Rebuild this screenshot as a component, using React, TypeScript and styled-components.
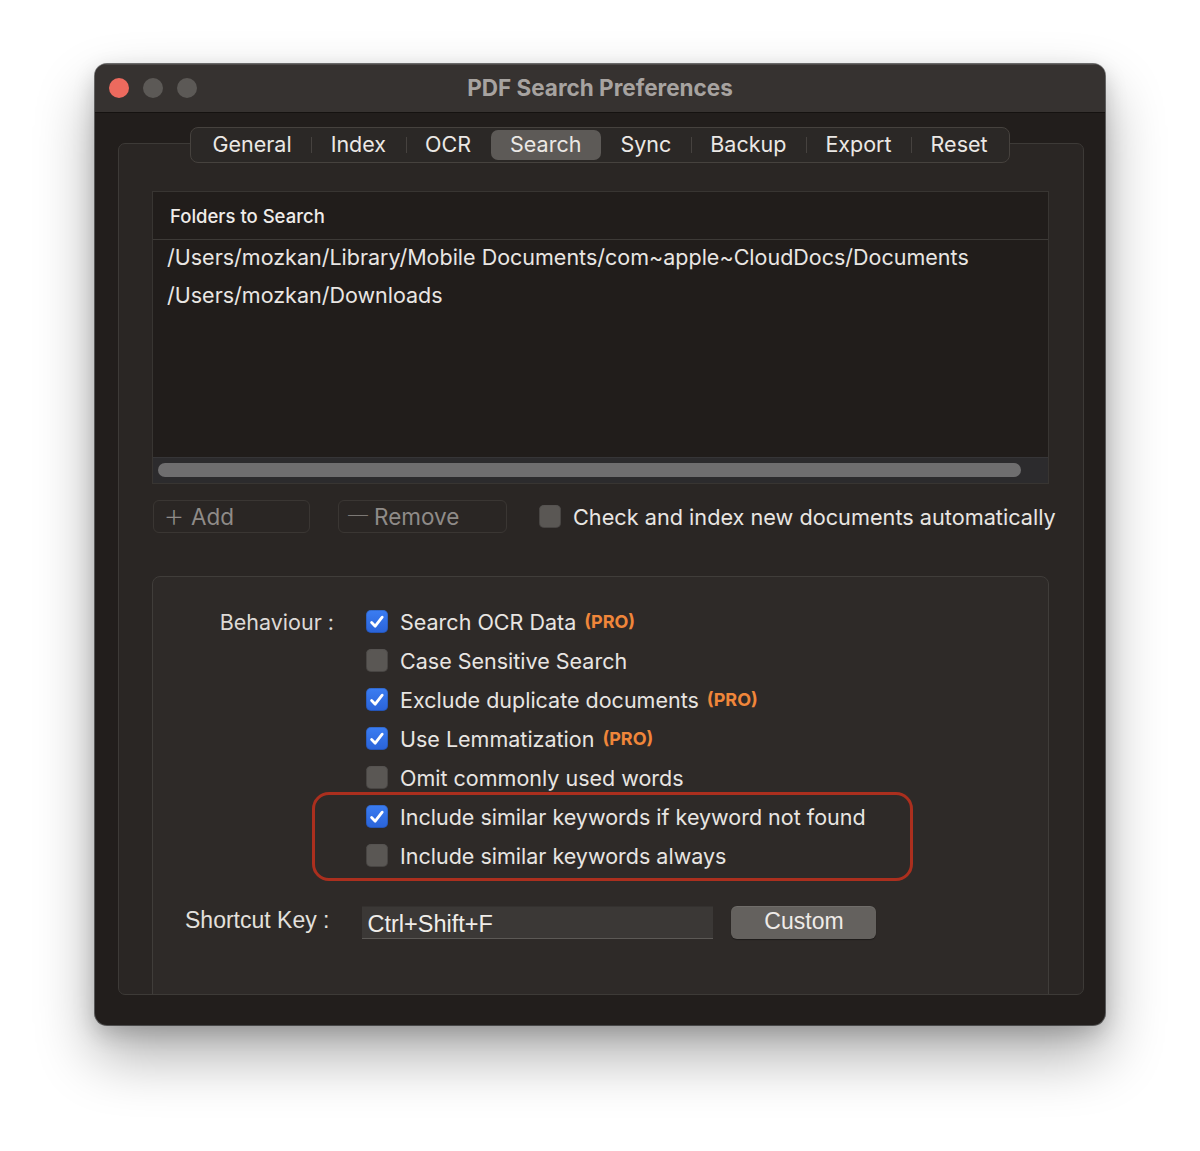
import React from "react";
import styled, { createGlobalStyle } from "styled-components";

const GlobalStyle = createGlobalStyle`
  html, body {
    margin: 0;
    background: #ffffff;
  }
  body {
    font-family: Inter, "Noto Sans", sans-serif;
    -webkit-font-smoothing: antialiased;
  }
`;

const Page = styled.div`
  height: 1151px;
  box-sizing: border-box;
  padding-top: 64px;
  display: flex;
  justify-content: center;
`;

const Window = styled.div`
  width: 1010px;
  height: 961px;
  border-radius: 12px;
  background: #221e1c;
  overflow: hidden;
  display: flex;
  flex-direction: column;
  box-shadow: 0 0 0 1px rgba(0, 0, 0, 0.55), 0 30px 60px rgba(0, 0, 0, 0.33),
    0 8px 22px rgba(0, 0, 0, 0.18);
`;

const TitleBar = styled.div`
  height: 48px;
  flex: none;
  display: grid;
  grid-template-columns: 1fr auto 1fr;
  align-items: center;
  background: #363230;
  border-bottom: 1px solid #151210;
  box-shadow: inset 0 1px 0 rgba(255, 255, 255, 0.12);
  padding: 0 14px;
`;

const Lights = styled.div`
  display: flex;
  gap: 14px;
`;

const Light = styled.span<{ $color: string }>`
  width: 20px;
  height: 20px;
  border-radius: 50%;
  background: ${(p) => p.$color};
`;

const Title = styled.div`
  font-size: 22.5px;
  font-weight: 700;
  color: #a7a3a0;
  padding-bottom: 2px;
`;

const Body = styled.div`
  flex: 1;
  display: flex;
  flex-direction: column;
  padding: 14px 21px 30px 23px;
  min-height: 0;
`;

const Tabs = styled.div`
  align-self: center;
  position: relative;
  z-index: 1;
  display: flex;
  align-items: center;
  height: 36px;
  box-sizing: border-box;
  padding: 0 2px;
  margin-right: 2px;
  border: 1px solid #46423e;
  border-radius: 8px;
  background: #2b2826;
`;

const Tab = styled.div<{ $active?: boolean; $sep?: boolean }>`
  position: relative;
  height: 30px;
  display: flex;
  align-items: center;
  padding: 0 19.5px 2px;
  box-sizing: border-box;
  border-radius: 7px;
  font-size: 21.5px;
  color: #ebe8e5;
  background: ${(p) => (p.$active ? "#5d5a57" : "transparent")};

  &::before {
    content: "";
    display: ${(p) => (p.$sep ? "block" : "none")};
    position: absolute;
    left: 0;
    top: 7px;
    bottom: 7px;
    width: 1px;
    background: #46423f;
  }
`;

const TabBox = styled.div`
  flex: 1;
  margin-top: -20px;
  display: flex;
  flex-direction: column;
  border: 1px solid #3d3a37;
  border-radius: 7px;
  background: #2a2624;
  padding: 47px 34px 0 33px;
  overflow: hidden;
  min-height: 0;
`;

const Table = styled.div`
  height: 293px;
  flex: none;
  box-sizing: border-box;
  display: flex;
  flex-direction: column;
  border: 1px solid #383532;
  background: #211d1b;
`;

const TableHeader = styled.div`
  height: 47px;
  flex: none;
  display: flex;
  align-items: center;
  padding-left: 17px;
  font-size: 18.5px;
  font-weight: 500;
  color: #efece9;
  border-bottom: 1px solid #3d3a37;
`;

const Rows = styled.div`
  flex: 1;
`;

const PathRow = styled.div`
  height: 38px;
  box-sizing: border-box;
  display: flex;
  align-items: center;
  padding: 0 0 4px 14px;
  font-size: 21.5px;
  color: #e9e6e3;
  white-space: nowrap;
`;

const ScrollTrack = styled.div`
  height: 26px;
  flex: none;
  box-sizing: border-box;
  padding: 5px 27px 5px 5px;
  background: #2c2b2d;
  border-top: 1px solid #363537;
`;

const ScrollThumb = styled.div`
  height: 14px;
  border-radius: 7px;
  background: #6f6e6f;
`;

const Actions = styled.div`
  margin-top: 16px;
  padding-left: 1px;
  display: flex;
  align-items: center;
  height: 33px;
  flex: none;
`;

const GhostButton = styled.div<{ $width: number; $gap: number }>`
  width: ${(p) => p.$width}px;
  flex: none;
  height: 33px;
  box-sizing: border-box;
  margin-right: ${(p) => p.$gap}px;
  display: flex;
  align-items: center;
  gap: 6px;
  padding: 0 0 1px 9px;
  border: 1px solid #3a3633;
  border-radius: 6px;
  font-size: 22.5px;
  color: #8f8b88;
`;

const Glyph = styled.span<{ $size: number }>`
  font-weight: 200;
  font-size: ${(p) => p.$size}px;
  line-height: 1;
  margin-top: -3px;
`;

const Option = styled.label`
  display: flex;
  align-items: center;
  gap: 12px;
  height: 39px;
  font-size: 21.5px;
  color: #e8e5e2;
  white-space: nowrap;
`;

const AutoOption = styled(Option)`
  flex: none;
  font-size: 21.7px;
`;

const Box = styled.span<{ $checked?: boolean }>`
  width: 22px;
  height: 23px;
  flex: none;
  box-sizing: border-box;
  border-radius: 5px;
  display: flex;
  align-items: center;
  justify-content: center;
  background: ${(p) =>
    p.$checked ? "linear-gradient(#3b7df2, #2a63d8)" : "#5a5754"};
  box-shadow: ${(p) =>
    p.$checked
      ? "inset 0 0 0 1px rgba(0,0,0,0.15)"
      : "inset 0 1px 0 rgba(255,255,255,0.08), inset 0 0 0 1px rgba(0,0,0,0.2)"};
`;

const Pro = styled.span`
  font-size: 18px;
  font-weight: 700;
  color: #f0863a;
  margin-left: -4px;
`;

const Section = styled.div`
  flex: 1;
  margin-top: 43px;
  margin-bottom: -12px;
  border: 1px solid #403d3a;
  border-radius: 8px;
  background: #2e2a28;
  padding-top: 25px;
`;

const Form = styled.div`
  display: grid;
  grid-template-columns: 181px auto;
  column-gap: 32px;
  align-items: start;
`;

const FieldLabel = styled.div`
  height: 39px;
  display: flex;
  align-items: center;
  justify-content: flex-end;
  font-size: 21.5px;
  color: #dedad7;
`;

const Options = styled.div`
  display: flex;
  flex-direction: column;
`;

const Highlight = styled.div`
  position: relative;

  &::after {
    content: "";
    position: absolute;
    left: -54px;
    top: -5px;
    width: 601px;
    bottom: -6px;
    box-sizing: border-box;
    border: 3px solid #ab2f1e;
    border-radius: 17px;
    pointer-events: none;
  }
`;

const ShortcutRow = styled.div`
  margin-top: 31px;
  display: flex;
  align-items: center;
  padding-left: 32px;
  font-family: "Liberation Sans", Arial, sans-serif;
`;

const ShortcutLabel = styled.div`
  font-size: 23px;
  color: #e3e0dd;
  margin-right: 33px;
  padding-bottom: 4px;
`;

const KeyField = styled.div`
  width: 351px;
  height: 33px;
  box-sizing: border-box;
  display: flex;
  align-items: center;
  padding: 4px 0 0 5px;
  background: #3b3836;
  border-top: 1px solid #34312f;
  border-bottom: 1px solid #5c5956;
  font-size: 23.5px;
  color: #f0ede9;
  margin-right: 18px;
`;

const PushButton = styled.div`
  width: 145px;
  height: 33px;
  box-sizing: border-box;
  padding-bottom: 2px;
  display: flex;
  align-items: center;
  justify-content: center;
  border-radius: 6px;
  background: #64615e;
  box-shadow: 0 1px 1px rgba(0, 0, 0, 0.35), inset 0 1px 0 rgba(255, 255, 255, 0.08);
  font-size: 23px;
  color: #efebe8;
`;

function Check({ checked }: { checked?: boolean }) {
  return (
    <Box $checked={checked}>
      {checked && (
        <svg width="18" height="18" viewBox="0 0 18 18">
          <path
            d="M3.6 9.6 L7.2 13.2 L14.2 4.2"
            fill="none"
            stroke="#ffffff"
            strokeWidth="2.8"
            strokeLinecap="round"
            strokeLinejoin="round"
          />
        </svg>
      )}
    </Box>
  );
}

const tabs = ["General", "Index", "OCR", "Search", "Sync", "Backup", "Export", "Reset"];
const active = "Search";

const folders = [
  "/Users/mozkan/Library/Mobile Documents/com~apple~CloudDocs/Documents",
  "/Users/mozkan/Downloads",
];

const options = [
  { text: "Search OCR Data", checked: true, pro: true },
  { text: "Case Sensitive Search", checked: false },
  { text: "Exclude duplicate documents", checked: true, pro: true },
  { text: "Use Lemmatization", checked: true, pro: true },
  { text: "Omit commonly used words", checked: false },
];

const similar = [
  { text: "Include similar keywords if keyword not found", checked: true },
  { text: "Include similar keywords always", checked: false },
];

export default function App() {
  return (
    <Page>
      <GlobalStyle />
      <Window>
        <TitleBar>
          <Lights>
            <Light $color="#ed6a5e" />
            <Light $color="#5c5956" />
            <Light $color="#5c5956" />
          </Lights>
          <Title>PDF Search Preferences</Title>
          <div />
        </TitleBar>
        <Body>
          <Tabs>
            {tabs.map((t, i) => {
              const prev = tabs[i - 1];
              const sep = i > 0 && t !== active && prev !== active;
              return (
                <Tab key={t} $active={t === active} $sep={sep}>
                  {t}
                </Tab>
              );
            })}
          </Tabs>
          <TabBox>
            <Table>
              <TableHeader>Folders to Search</TableHeader>
              <Rows>
                {folders.map((f) => (
                  <PathRow key={f}>{f}</PathRow>
                ))}
              </Rows>
              <ScrollTrack>
                <ScrollThumb />
              </ScrollTrack>
            </Table>
            <Actions>
              <GhostButton $width={157} $gap={28}>
                <Glyph $size={34}>+</Glyph>Add
              </GhostButton>
              <GhostButton $width={169} $gap={32}>
                <Glyph $size={20}>—</Glyph>Remove
              </GhostButton>
              <AutoOption>
                <Check />
                Check and index new documents automatically
              </AutoOption>
            </Actions>
            <Section>
              <Form>
                <FieldLabel>Behaviour :</FieldLabel>
                <Options>
                  {options.map((o) => (
                    <Option key={o.text}>
                      <Check checked={o.checked} />
                      {o.text}
                      {o.pro && <Pro>(PRO)</Pro>}
                    </Option>
                  ))}
                  <Highlight>
                    {similar.map((o) => (
                      <Option key={o.text}>
                        <Check checked={o.checked} />
                        {o.text}
                      </Option>
                    ))}
                  </Highlight>
                </Options>
              </Form>
              <ShortcutRow>
                <ShortcutLabel>Shortcut Key :</ShortcutLabel>
                <KeyField>Ctrl+Shift+F</KeyField>
                <PushButton>Custom</PushButton>
              </ShortcutRow>
            </Section>
          </TabBox>
        </Body>
      </Window>
    </Page>
  );
}
